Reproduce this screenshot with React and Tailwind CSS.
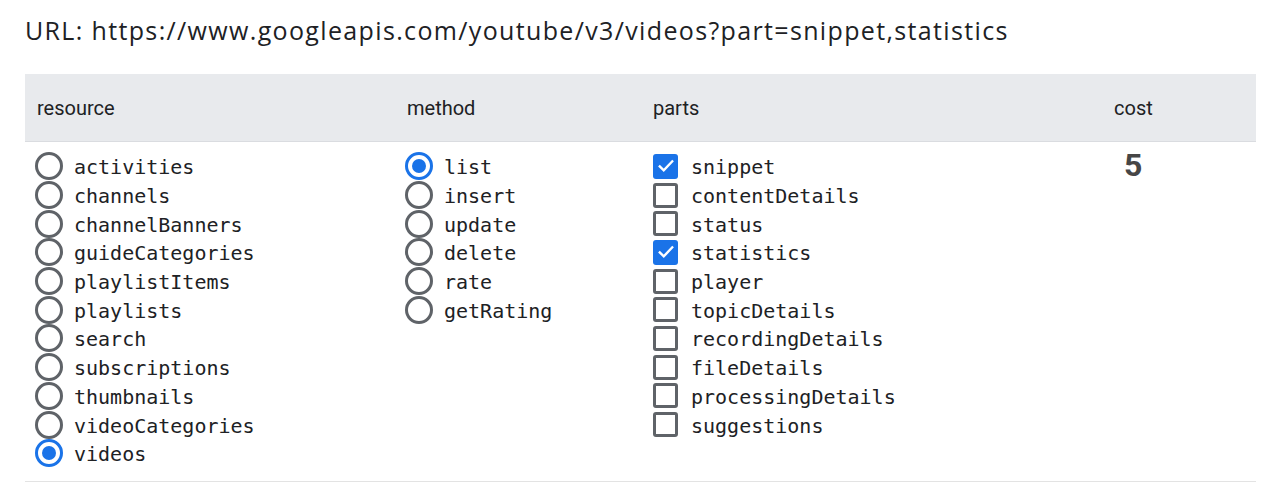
import React from "react";

const resources = ["activities","channels","channelBanners","guideCategories","playlistItems","playlists","search","subscriptions","thumbnails","videoCategories","videos"];
const methods = ["list","insert","update","delete","rate","getRating"];
const parts = ["snippet","contentDetails","status","statistics","player","topicDetails","recordingDetails","fileDetails","processingDetails","suggestions"];
const checkedParts = ["snippet","statistics"];

function Radio({ checked }) {
  return (
    <span className={"flex h-[28px] w-[28px] shrink-0 items-center justify-center rounded-full border-[3px] " + (checked ? "border-[#1a73e8]" : "border-[#5f6368]")}>
      {checked ? <span className="h-[14px] w-[14px] rounded-full bg-[#1a73e8]" /> : null}
    </span>
  );
}

function Check({ checked }) {
  return checked ? (
    <span className="flex h-[25px] w-[25px] shrink-0 items-center justify-center rounded-[3px] bg-[#1a73e8]">
      <svg width="20" height="20" viewBox="0 0 24 24" fill="none" stroke="white" strokeWidth="2.8" strokeLinecap="square">
        <path d="M4.5 12.5l4.8 4.8L19.5 6.5" />
      </svg>
    </span>
  ) : (
    <span className="h-[25px] w-[25px] shrink-0 rounded-[3px] border-[3px] border-[#5f6368]" />
  );
}

function Row({ children, label, gap }) {
  return (
    <div className={"flex h-[28.7px] items-center " + gap}>
      {children}
      <span className="relative top-[1px] font-['DejaVu_Sans_Mono',monospace] text-[20px] leading-none text-[#202124]">{label}</span>
    </div>
  );
}

export default function App() {
  return (
    <div className="min-h-[492px] bg-white px-[25px] pt-[12px] font-['Roboto',sans-serif]">
      <div className="h-[62px] text-[25px] leading-[36px] tracking-[1.35px] text-[#202124] font-['Open_Sans',sans-serif]">
        URL: https://www.googleapis.com/youtube/v3/videos?part=snippet,statistics
      </div>
      <div className="w-[1231px] border-b border-[#e3e3e3]">
        <div className="grid h-[68px] grid-cols-[370px_246px_461px_154px] items-center border-b border-[#dadce0] bg-[#e8eaed] text-[20px] text-[#202124]">
          <div className="pl-[12px]">resource</div>
          <div className="pl-[12px]">method</div>
          <div className="pl-[12px]">parts</div>
          <div className="pl-[12px]">cost</div>
        </div>
        <div className="grid grid-cols-[370px_246px_461px_154px] pt-[10px] pb-[13px]">
          <div className="pl-[10px]">
            {resources.map((r) => (
              <Row key={r} label={r} gap="gap-[11px]"><Radio checked={r === "videos"} /></Row>
            ))}
          </div>
          <div className="pl-[10px]">
            {methods.map((m) => (
              <Row key={m} label={m} gap="gap-[11px]"><Radio checked={m === "list"} /></Row>
            ))}
          </div>
          <div className="pl-[12px]">
            {parts.map((p) => (
              <Row key={p} label={p} gap="gap-[13px]"><Check checked={checkedParts.includes(p)} /></Row>
            ))}
          </div>
          <div className="pl-[22px]">
            <div className="h-[28.7px] text-[32px] font-bold leading-[26px] text-[#464646]">5</div>
          </div>
        </div>
      </div>
    </div>
  );
}
